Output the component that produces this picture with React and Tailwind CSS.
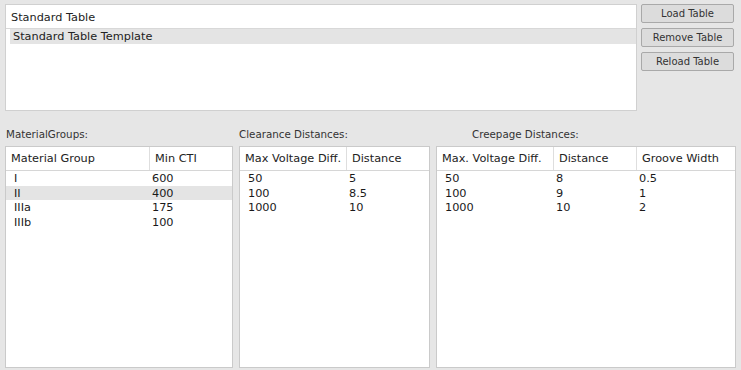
import React from "react";

const font = { fontFamily: '"DejaVu Sans", Verdana, sans-serif' };

const materialRows = [
  ["I", "600"],
  ["II", "400"],
  ["IIIa", "175"],
  ["IIIb", "100"],
];

const clearanceRows = [
  ["50", "5"],
  ["100", "8.5"],
  ["1000", "10"],
];

const creepageRows = [
  ["50", "8", "0.5"],
  ["100", "9", "1"],
  ["1000", "10", "2"],
];

const Button = ({ children }) => (
  <button className="h-[19px] w-[93px] rounded-[2px] border border-[#a9a9a9] bg-[#dcdcdc] pt-[1px] text-[10px] text-[#333] leading-none">
    {children}
  </button>
);

const DataTable = ({ cols, headers, rows, selected, dataPad }) => (
  <div className="flex h-[222px] flex-col border border-[#cacaca] bg-white">
    <div className={`grid ${cols} h-[24px] border-b border-[#d6d6d6]`}>
      {headers.map((h, i) => (
        <div
          key={h}
          className={`flex items-center pl-[5px] pt-[2px] text-[11.3px] text-[#222] whitespace-nowrap ${
            i > 0 ? "border-l border-[#dedede]" : ""
          }`}
        >
          {h}
        </div>
      ))}
    </div>
    <div className="flex flex-col">
      {rows.map((r, ri) => (
        <div
          key={ri}
          className={`grid ${cols} h-[14.7px] pt-[1px] text-[11.3px] leading-[14.7px] text-[#1a1a1a] ${
            ri === selected ? "bg-[#e4e4e4]" : ""
          }`}
        >
          {r.map((c, ci) => (
            <div key={ci} className={ci === 0 ? dataPad : "pl-[3px]"}>
              {c}
            </div>
          ))}
        </div>
      ))}
    </div>
  </div>
);

export default function App() {
  return (
    <div className="flex h-[370px] w-[741px] flex-col bg-[#e6e6e6]" style={font}>
      {/* top: table list + buttons */}
      <div className="mt-[4px] flex pl-[5px]">
        <div className="flex h-[107px] w-[632px] flex-col border border-[#d0d0d0] bg-white">
          <div className="flex h-[24px] items-center border-b border-[#d8d8d8] pl-[5px] pt-[3px] text-[11.3px] text-[#222]">
            Standard Table
          </div>
          <div className="ml-[4px] flex h-[15px] items-center bg-[#e4e4e4] pl-[3px] pt-[2px] text-[11.3px] text-[#222]">
            Standard Table Template
          </div>
        </div>
        <div className="ml-[4px] flex flex-col gap-[5px]">
          <Button>Load Table</Button>
          <Button>Remove Table</Button>
          <Button>Reload Table</Button>
        </div>
      </div>

      {/* bottom: three tables */}
      <div className="mt-[15px] flex gap-[6px] pl-[5px]">
        <div className="flex w-[228px] flex-col">
          <div className="h-[14px] pl-[1px] pt-[1px] text-[10.3px] leading-[14px] text-[#333]">MaterialGroups:</div>
          <div className="mt-[6px]">
            <DataTable
              cols="grid-cols-[143px_1fr]"
              headers={["Material Group", "Min CTI"]}
              rows={materialRows}
              selected={1}
              dataPad="pl-[8px]"
            />
          </div>
        </div>
        <div className="flex w-[191px] flex-col">
          <div className="h-[14px] pt-[1px] text-[10.3px] leading-[14px] text-[#333]">Clearance Distances:</div>
          <div className="mt-[6px]">
            <DataTable
              cols="grid-cols-[106px_1fr]"
              headers={["Max Voltage Diff.", "Distance"]}
              rows={clearanceRows}
              dataPad="pl-[8px]"
            />
          </div>
        </div>
        <div className="flex w-[300px] flex-col">
          <div className="h-[14px] pl-[36px] pt-[1px] text-[10.3px] leading-[14px] text-[#333]">Creepage Distances:</div>
          <div className="mt-[6px]">
            <DataTable
              cols="grid-cols-[116px_83px_1fr]"
              headers={["Max. Voltage Diff.", "Distance", "Groove Width"]}
              rows={creepageRows}
              dataPad="pl-[8px]"
            />
          </div>
        </div>
      </div>
    </div>
  );
}
